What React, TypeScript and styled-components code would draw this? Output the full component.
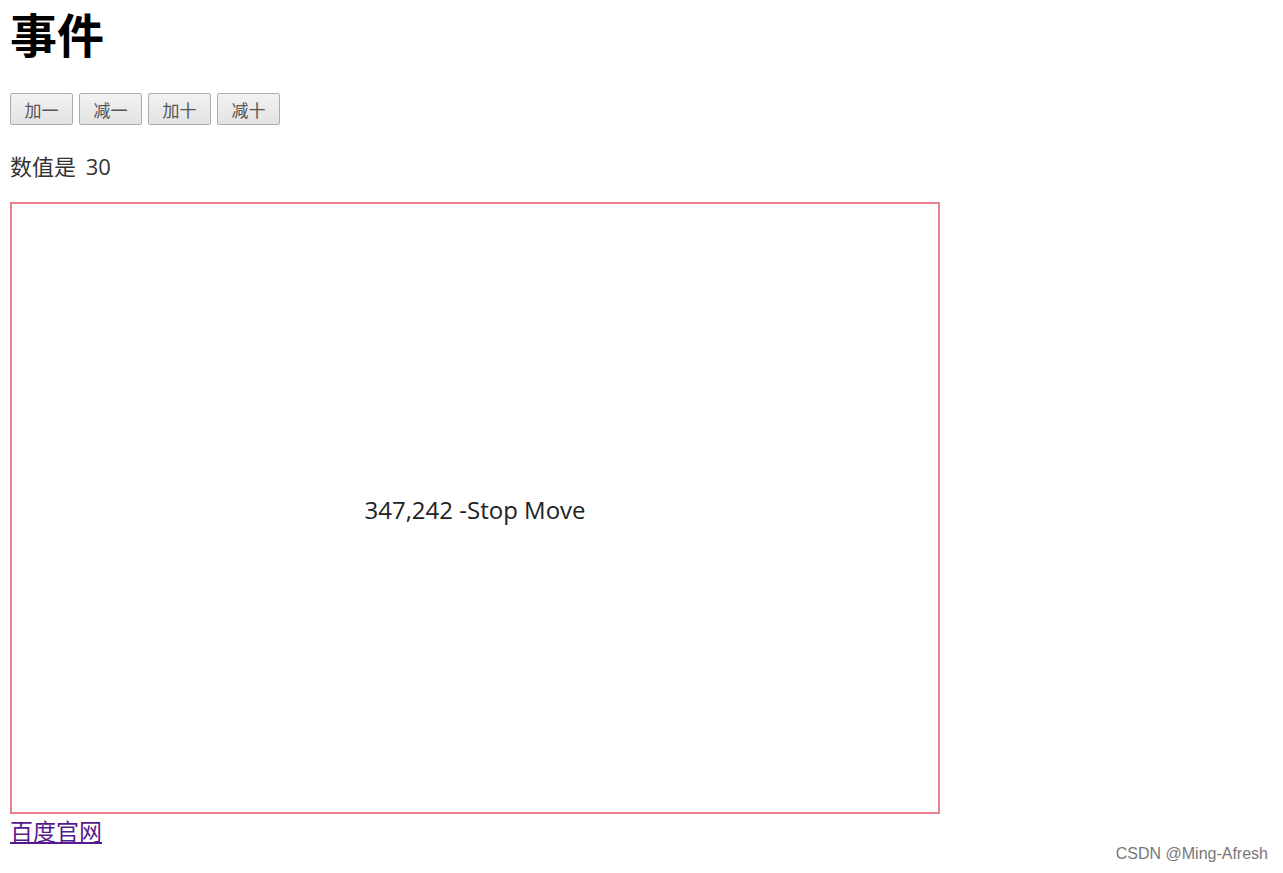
import * as React from 'react';
import styled, { createGlobalStyle } from 'styled-components';

const GlobalStyle = createGlobalStyle`
  html, body {
    margin: 0;
    padding: 0;
    background: #fff;
  }
  body {
    font-family: "Open Sans", "Noto Sans CJK SC", sans-serif;
    color: #222;
  }
`;

const Page = styled.div`
  position: relative;
  width: 1283px;
  min-height: 873px;
  padding: 0 0 0 10px;
  box-sizing: border-box;
`;

const Title = styled.h1`
  margin: 0;
  font-family: "Noto Sans CJK SC", sans-serif;
  font-size: 47px;
  line-height: 66px;
  font-weight: 700;
  color: #000;
`;

const ButtonRow = styled.div`
  display: flex;
  gap: 6px;
  margin-top: 27px;
`;

const Button = styled.button`
  width: 63px;
  height: 32px;
  padding: 0;
  border: 1px solid #acacac;
  border-radius: 2px;
  background: linear-gradient(#f2f2f2, #e3e3e3);
  font-family: "Noto Sans CJK SC", sans-serif;
  font-size: 17px;
  color: #555;
  cursor: pointer;
`;

const Value = styled.p`
  margin: 28px 0 0;
  font-size: 22px;
  line-height: 26px;
  word-spacing: 4px;
  color: #333;
`;

const TrackBox = styled.div`
  margin-top: 23px;
  width: 930px;
  height: 612px;
  box-sizing: border-box;
  border: 2px solid #ec7f8b;
  display: flex;
  align-items: center;
  justify-content: center;
  padding-top: 2px;
  font-size: 24px;
  color: #222;
`;

const Link = styled.a`
  display: inline-block;
  font-family: "Noto Sans CJK SC", sans-serif;
  font-size: 23px;
  line-height: 32px;
  color: #551a8b;
  text-decoration: underline;
`;

const Watermark = styled.div`
  position: absolute;
  right: 15px;
  bottom: 10px;
  font-family: "Liberation Sans", sans-serif;
  font-size: 16px;
  color: #777;
`;

export default function App() {
  const [count, setCount] = React.useState(30);
  const [pos, setPos] = React.useState('347,242 -Stop Move');

  return (
    <Page>
      <GlobalStyle />
      <Title>事件</Title>
      <ButtonRow>
        <Button onClick={() => setCount(count + 1)}>加一</Button>
        <Button onClick={() => setCount(count - 1)}>减一</Button>
        <Button onClick={() => setCount(count + 10)}>加十</Button>
        <Button onClick={() => setCount(count - 10)}>减十</Button>
      </ButtonRow>
      <Value>数值是 {count}</Value>
      <TrackBox
        onMouseMove={(e) => setPos(`${e.nativeEvent.offsetX},${e.nativeEvent.offsetY} -Move`)}
        onMouseLeave={() => setPos((p) => p.replace('-Move', '-Stop Move'))}
      >
        {pos}
      </TrackBox>
      <Link href="#">百度官网</Link>
      <Watermark>CSDN @Ming-Afresh</Watermark>
    </Page>
  );
}
